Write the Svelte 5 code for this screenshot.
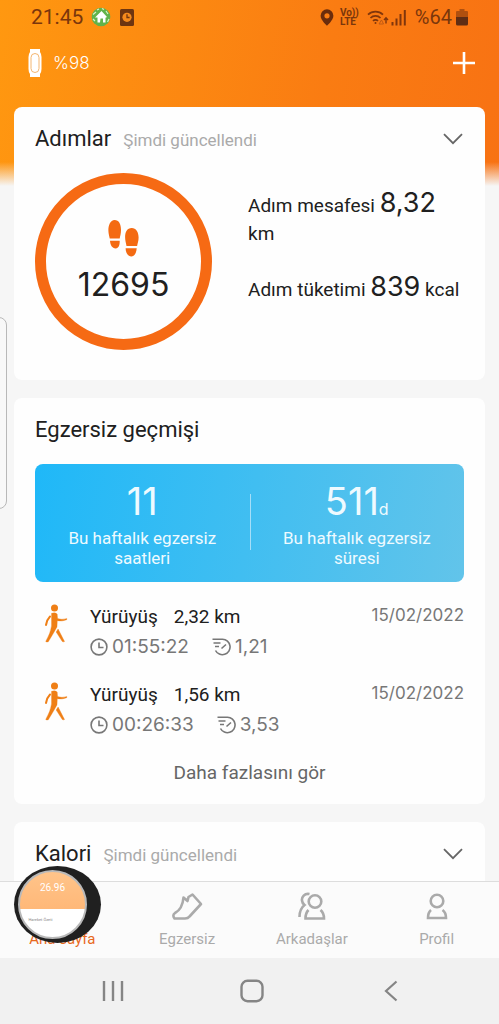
<script>
  const sessions = [
    { name: 'Yürüyüş', distance: '2,32 km', time: '01:55:22', pace: '1,21', date: '15/02/2022' },
    { name: 'Yürüyüş', distance: '1,56 km', time: '00:26:33', pace: '3,53', date: '15/02/2022' }
  ];
</script>

{#snippet chevron()}
  <svg width="20" height="12" viewBox="0 0 20 12" fill="none" stroke="#666" stroke-width="1.8"><path d="M1 1.2 10 10.2 19 1.2" /></svg>
{/snippet}

<div class="screen">
  <div class="status">
    <span class="clock">21:45</span>
    <svg width="20" height="20" viewBox="0 0 20 20">
      <circle cx="10" cy="10" r="9.3" fill="#62b34a" />
      <path d="M2 7.5 5 5M4 14l-2-2M15 4l2 3M13 2.5l-2-1M16.5 15l1.5-3M6 3l2-1" stroke="#d9f0c8" stroke-width="1.2" fill="none" />
      <path d="M4 10.500 10.500 4l5.500 6-1.500.8V15.500h-2.500v-4H9.500l-.5 4H6.500v-5z" fill="#fff" />
    </svg>
    <svg class="alarm" width="14" height="17" viewBox="0 0 14 17">
      <rect width="14" height="17" rx="1.5" fill="#6e3510" />
      <circle cx="7" cy="8.3" r="4.6" fill="#f58a1c" />
      <path d="M7 5.3v3.2h2.6" stroke="#6e3510" stroke-width="1.3" fill="none" />
    </svg>
    <span class="grow"></span>
    <svg width="14" height="17" viewBox="0 0 14 17"><path fill="#6a2c0c" fill-rule="evenodd" d="M7 .3a6.4 6.4 0 0 0-6.4 6.4C.6 11 7 16.8 7 16.8S13.400 11 13.400 6.700A6.400 6.400 0 0 0 7 .3zm0 3.900a2.600 2.600 0 1 1 0 5.200 2.600 2.600 0 0 1 0-5.200z" /></svg>
    <span class="volte"><span>Vo))</span><span>LTE</span></span>
    <svg width="22" height="17" viewBox="0 0 22 17" fill="none" stroke="#80360c" stroke-width="1.7">
      <path d="M1 5.600a11 11 0 0 1 15 0M3.500 9a7 7 0 0 1 10 0M6 12a3.500 3.500 0 0 1 5 0" />
      <circle cx="8.500" cy="14" r="1" fill="#80360c" stroke="none" />
      <path d="m12 15 2.500-4 2 4z" stroke="#c05a14" stroke-width="1" />
      <path d="M19 14.500v-5M17 11l2-2.200 2 2.200" stroke-width="1.400" />
    </svg>
    <svg class="bars" width="16" height="17" viewBox="0 0 16 17" fill="#80360c"><path d="M.5 13h2v3.500h-2zM4.500 9.500h2v7h-2zM8.500 5h2v11.500h-2zM12.800 1h2v15.500h-2z" /></svg>
    <span class="percent">%64</span>
    <svg width="12" height="17" viewBox="0 0 12 17"><path d="M3.500 0h5v2H11q1 0 1 1v6H0V3q0-1 1-1h2.500z" fill="#b0500f" /><path d="M0 8h12v7q0 1.500-1.500 1.500h-9Q0 16.500 0 15z" fill="#5f2d14" /></svg>
  </div>

  <header>
    <svg width="14" height="28" viewBox="0 0 14 28">
      <path d="M2 0h10v3Q13.500 5 13.500 8v12q0 3-1.500 5v3H2v-3Q.5 23 .5 20V8q0-3 1.500-5z" fill="#fff" />
      <rect x="3" y="4.500" width="8" height="19" rx="4" fill="none" stroke="#f4b670" stroke-width="1" />
    </svg>
    <span class="charge">%98</span>
    <button class="add" aria-label="Ekle">
      <svg width="24" height="24" viewBox="0 0 24 24" stroke="#fff" stroke-width="2.600"><path d="M12 1v22M1 12h22" /></svg>
    </button>
  </header>

  <main>
    <section class="card steps">
      <div class="head">
        <h2>Adımlar</h2><span class="note">Şimdi güncellendi</span>
        <button aria-label="Adımlar">{@render chevron()}</button>
      </div>
      <div class="body">
        <div class="ring">
          <svg width="31" height="38" viewBox="0 0 31 38" fill="#f46a12">
            <path d="M6.500 0C2.500 0 .2 5 .4 11c.1 3 .9 5 1.300 7.500h10C12.200 16 13 13.500 13 10 13 4 11 0 6.500 0zM2 20.800h9.700c.2 4.200-1 7.700-4 7.700-3.600 0-5.400-3.500-5.700-7.700z" />
            <path d="M23.800 8C28 8 30.600 12 30.600 17.500c0 3.500-1 5.500-1.500 8.500h-10.600c-.5-3-1.400-5.500-1.400-9C17.100 12 19 8 23.800 8zM17.600 28.300h11.100c-.3 4.200-2 8.200-5.400 8.200s-5.700-4-5.700-8.200z" />
          </svg>
          <strong>12695</strong>
        </div>
        <div class="facts">
          <p>Adım mesafesi <b>8,32</b> km</p>
          <p>Adım tüketimi <b>839</b> kcal</p>
        </div>
      </div>
    </section>

    <section class="card">
      <div class="head"><h2>Egzersiz geçmişi</h2></div>
      <div class="week">
        <div><div class="total">11</div>Bu haftalık egzersiz saatleri</div>
        <div><div class="total">511<small>d</small></div>Bu haftalık egzersiz süresi</div>
      </div>
      <ul>
        {#each sessions as s}
          <li>
            <svg class="walker" width="24" height="40" viewBox="0 0 24 40" fill="#ef7f16" stroke="#ef7f16" stroke-linejoin="round">
              <circle cx="10.500" cy="4" r="3.500" stroke="none" />
              <path d="M7.500 9.300q3.500-1.500 5.700.8l.4 4.400q4 1.600 9.200-.1v1.300q-5 2.100-9.500 1l-.3 6.300Q8.500 31 4.300 37.800q-1.500.6-2.600-.3Q6.500 29 7.500 22z" stroke-width=".3" />
              <path d="M6 12.500Q3 15.500 2 21" fill="none" stroke-width="2" stroke-linecap="round" />
              <path d="M12.200 28l1.900-2.900 6.400 12.400q-1.200.7-2.200 0z" stroke-width=".4" />
            </svg>
            <div class="info">
              <div class="line"><span>{s.name}</span><span class="km">{s.distance}</span><time>{s.date}</time></div>
              <div class="line detail">
                <svg width="18" height="18" viewBox="0 0 18 18" fill="none" stroke="#777" stroke-width="1.600"><circle cx="9" cy="9" r="7.900" /><path d="M9 4.500V9.500h4.500" /></svg>
                <span>{s.time}</span>
                <svg class="pace" width="19" height="18" viewBox="0 0 19 18" fill="none" stroke="#777" stroke-width="1.600"><path d="M.5 1.300h10a7.700 7.700 0 1 1-7 11.200M1.500 5h7M3 8.500h4M9.500 10.500l4.500-4" /></svg>
                <span>{s.pace}</span>
              </div>
            </div>
          </li>
        {/each}
      </ul>
      <button class="more">Daha fazlasını gör</button>
    </section>

    <section class="card">
      <div class="head">
        <h2>Kalori</h2><span class="note">Şimdi güncellendi</span>
        <button aria-label="Kalori">{@render chevron()}</button>
      </div>
    </section>
  </main>

  <nav class="tabs">
    <a href="#home" class="active"><span class="icon"></span>Ana sayfa</a>
    <a href="#exercise">
      <svg class="icon" width="32" height="30" viewBox="0 0 32 30" fill="none" stroke="#aaa" stroke-width="2.600" stroke-linejoin="round"><path d="M12.500 5.500l4 3.500 1-4 4-2.500L30 12 18.500 24.500Q17 26.500 14 26.500H3.500Q1 23 4 21 11.500 17 12.500 5.500z" /></svg>
      Egzersiz
    </a>
    <a href="#friends">
      <svg class="icon" width="30" height="30" viewBox="0 0 30 30" fill="none" stroke="#aaa" stroke-width="2.600"><circle cx="18" cy="9.500" r="6.300" /><path d="M11.500 18Q8.500 21 8.500 26.500h18.500q0-5.500-3.500-8.500M12.500 2C7.500 1 4.500 5 5 8.500c.2 2 1.200 3.500 2.500 4.500Q2.500 17 2.500 25" /></svg>
      Arkadaşlar
    </a>
    <a href="#profile">
      <svg class="icon" width="24" height="30" viewBox="0 0 24 30" fill="none" stroke="#aaa" stroke-width="2.600"><circle cx="12" cy="9" r="6.300" /><path d="M6 18Q3 20.500 3 26h18q0-5.500-3.500-8" /></svg>
      Profil
    </a>
  </nav>

  <div class="system">
    <button aria-label="Son uygulamalar"><svg width="22" height="22" viewBox="0 0 22 22" stroke="#858585" stroke-width="2.400"><path d="M2 1v20M11 1v20M20 1v20" /></svg></button>
    <button aria-label="Ana ekran"><svg width="24" height="24" viewBox="0 0 24 24" fill="none" stroke="#858585" stroke-width="2.400"><rect x="1.500" y="1.800" width="21" height="20.400" rx="6" /></svg></button>
    <button aria-label="Geri"><svg width="22" height="22" viewBox="0 0 22 22" fill="none" stroke="#858585" stroke-width="2.200"><path d="M16.500 1.500 6 11l10.500 9.500" /></svg></button>
  </div>

  <div class="edge"></div>
  <div class="bubble">
    <div class="preview"><span>26.96</span><i>Hareket Özeti</i></div>
  </div>
</div>

<style>
  :global(body) { margin: 0; }
  .screen {
    position: relative;
    display: flex;
    flex-direction: column;
    height: 100vh;
    overflow: hidden;
    font-family: Roboto, sans-serif;
    color: #202020;
    background:
      linear-gradient(to bottom, transparent 162px, #f6f6f6 186px),
      linear-gradient(100deg, #ff9810 0%, #fa7c12 50%, #f66a14 100%);
  }
  button { border: 0; padding: 0; background: none; font: inherit; color: inherit; display: flex; align-items: center; justify-content: center; }
  svg { display: block; flex: none; }
  .status { display: flex; align-items: center; height: 34px; padding: 0 31px; color: #7a360c; }
  .clock { font-size: 21px; margin-right: 8px; }
  .alarm { margin-left: 9px; }
  .grow { flex: 1; }
  .volte { display: flex; flex-direction: column; font-size: 10px; line-height: 9px; font-weight: 700; margin: 0 8px 0 6px; }
  .bars { margin: 0 8px 0 2px; }
  .percent { font-size: 20px; margin-right: 4px; }
  header { display: flex; align-items: center; height: 57px; padding: 0 23px 16px 28px; color: #fff; }
  .charge { font-family: Inter, sans-serif; font-size: 17px; font-weight: 300; margin-left: 11px; flex: 1; }
  main { flex: 1; min-height: 0; overflow: hidden; display: flex; flex-direction: column; gap: 18px; padding: 0 14px; }
  .card { flex: none; background: #fefefe; border-radius: 8px; padding: 0 21px; }
  .steps { padding-bottom: 30px; }
  .head { display: flex; align-items: center; height: 66px; box-sizing: border-box; padding-bottom: 3px; }
  .head button { margin-left: auto; width: 22px; height: 32px; }
  h2 { margin: 0; font-size: 22px; font-weight: 400; line-height: 28px; }
  .note { font-size: 17px; color: #aaa; margin: 2px 0 0 12px; }
  .body { display: flex; gap: 36px; }
  .ring { box-sizing: border-box; width: 177px; height: 177px; flex: none; border: 11px solid #f66a14; border-radius: 50%; display: flex; flex-direction: column; align-items: center; padding-top: 36px; }
  .ring strong { font: 400 32px/38px Inter, sans-serif; margin-top: 8px; }
  .facts { padding-top: 17px; }
  p { margin: 0; font-size: 19px; line-height: 28px; }
  p + p { margin-top: 26px; }
  b { font: 400 27px/26px Inter, sans-serif; }
  .week { display: grid; grid-template-columns: 1fr 1fr; height: 118px; box-sizing: border-box; padding-top: 16px; border-radius: 8px; background: linear-gradient(100deg, #1fb8f8, #62c4ea); color: #eefaff; font-size: 17px; line-height: 20px; text-align: center; }
  .week > div { padding: 0 30px; }
  .week > div + div { background: linear-gradient(#a5def8, #a5def8) no-repeat 0 14px / 1px 56px; }
  .total { font: 400 38px/42px Inter, sans-serif; margin-bottom: 6px; }
  .total small { font-size: 16px; line-height: 16px; }
  ul { list-style: none; margin: 0; padding: 19px 0 0; display: flex; flex-direction: column; gap: 17px; }
  li { display: flex; }
  .walker { margin: 3px 22px 0 9px; }
  .info { flex: 1; }
  .line { display: flex; align-items: center; height: 30px; font-size: 19px; }
  .km { margin-left: 16px; }
  time { margin-left: auto; font: 400 17px/20px Inter, sans-serif; color: #777; padding-bottom: 2px; }
  .detail { font: 400 19px/31px Inter, sans-serif; color: #777; height: 31px; }
  .detail span { margin-left: 4px; }
  .detail .pace { margin-left: 23px; }
  .more { width: 100%; height: 64px; font-size: 19px; color: #666; }
  .tabs { display: grid; grid-template-columns: repeat(4, 1fr); height: 76px; flex: none; border-top: 1px solid #ddd; background: #fbfbfb; }
  .tabs a { display: flex; flex-direction: column; align-items: center; padding-top: 10px; gap: 8px; color: #aaa; font-size: 15px; line-height: 18px; text-decoration: none; }
  .tabs .active { color: #e8681c; }
  .icon { height: 30px; }
  .system { display: grid; grid-template-columns: repeat(3, 1fr); height: 66px; flex: none; padding: 0 38px 0 43px; background: #f1f1f1; }
  .edge { position: absolute; left: -13px; top: 317px; width: 18px; height: 190px; border: 1px solid #b8b8b8; border-radius: 8px; background: #f8f8f8; }
  .bubble { position: absolute; left: 14px; bottom: 81px; box-sizing: border-box; width: 87px; height: 77px; padding: 4px; border-radius: 44px / 39px; background: #202020; }
  .preview { box-sizing: border-box; width: 69px; height: 69px; border: 2px solid #b9b9b9; border-radius: 50%; background: linear-gradient(#ffc48a, #ffb878 37px, #fff 37px); display: flex; flex-direction: column; align-items: center; padding-top: 9px; overflow: hidden; }
  .preview span { font-size: 10px; line-height: 14px; color: #fff; }
  .preview i { font-size: 4px; line-height: 6px; font-style: normal; color: #888; margin: 22px 24px 0 0; }
</style>
